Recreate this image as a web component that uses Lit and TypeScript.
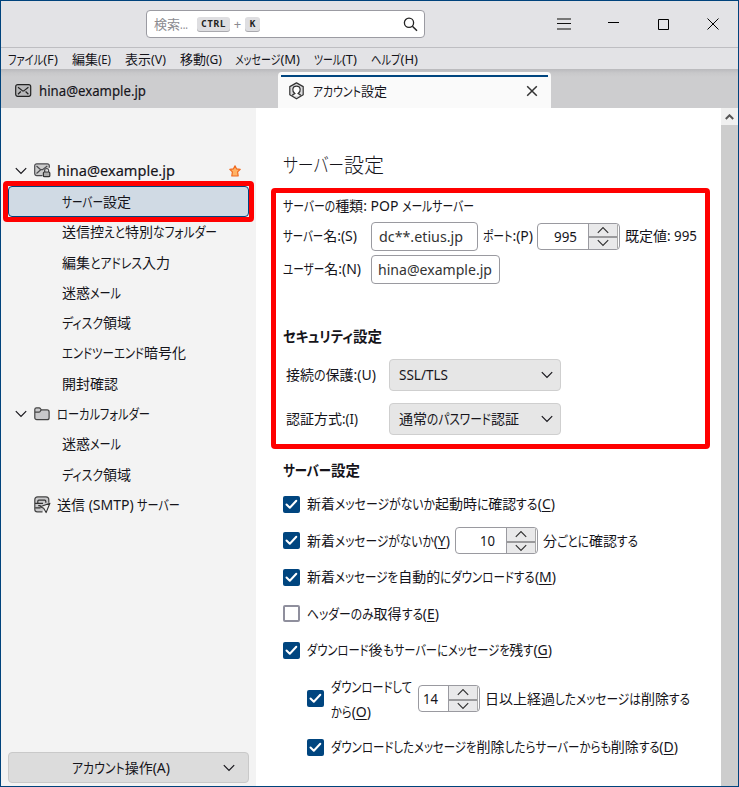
import { LitElement, html, css } from "lit";
import { customElement, property, state } from "lit/decorators.js";
import { styleMap } from "lit/directives/style-map.js";

type Run = { text: string; kind: string };

// A line of text that condenses its kana runs to a given width, leaving the
// ideographs and Latin letters at their natural proportions. Lines without
// kana condense their Latin runs instead.
@customElement("fit-text")
class FitText extends LitElement {
  @property() text = "";
  @property({ type: Number }) width = 0;
  @state() widths: number[] | null = null;

  static styles = css`
    :host { display: inline-block; white-space: pre; flex: none; }
    .line { display: inline-block; white-space: pre; }
    .run { display: inline-block; white-space: pre; transform-origin: 0 50%; }
    .key { text-decoration: underline; text-underline-offset: 2px; text-decoration-thickness: 1px; }
  `;

  get runs(): Run[] {
    const out: Run[] = [];
    const re = /_([A-Z])_|([\u4e00-\u9fff]+)|([\u3040-\u30ff]+)|((?:(?!_[A-Z]_)[^\u3040-\u30ff\u4e00-\u9fff])+)/g;
    for (const m of this.text.matchAll(re)) {
      if (m[1]) out.push({ text: m[1], kind: "key" });
      else if (m[2]) out.push({ text: m[2], kind: "kanji" });
      else if (m[3]) out.push({ text: m[3], kind: "kana" });
      else out.push({ text: m[4], kind: "latin" });
    }
    return out;
  }

  firstUpdated() {
    const spans = [...this.renderRoot.querySelectorAll<HTMLElement>(".run")];
    this.widths = spans.map((s) => s.getBoundingClientRect().width);
  }

  render() {
    const runs = this.runs;
    const w = this.widths;
    const has = (k: string) => runs.some((r) => r.kind === k);
    const elastic = has("kana") ? ["kana"] : has("latin") ? ["latin", "key"] : ["kanji"];
    let k = 1;
    if (w) {
      const total = w.reduce((a, v) => a + v, 0);
      const soft = w.reduce((a, v, i) => a + (elastic.includes(runs[i].kind) ? v : 0), 0);
      k = (this.width - (total - soft)) / soft;
    }
    return html`<span class="line">${runs.map((r, i) => {
      const s = elastic.includes(r.kind) ? k : 1;
      const st = w ? { width: `${w[i] * s}px`, transform: s === 1 ? "none" : `scaleX(${s})` } : {};
      return html`<span class="run ${r.kind}" style=${styleMap(st)}>${r.text}</span>`;
    })}</span>`;
  }
}

const fit = (text: string, width: number) => html`<fit-text .text=${text} .width=${width}></fit-text>`;

const chevron = (cls = "chev") => html`<svg class=${cls} width="12" height="8" viewBox="0 0 12 8">
  <path d="M.8 1.2 6 6.4l5.2-5.2" fill="none" stroke="currentColor" stroke-width="1.2"/></svg>`;

const mailIcon = html`<svg width="17" height="14" viewBox="0 0 17 14">
  <rect x=".7" y=".7" width="15" height="11.6" rx="2" fill="#b9b9bb" stroke="#222" stroke-width="1.2"/>
  <path d="M3 3.200 7 6.400q1.200.9 2.400 0l4-3.200M3 10.200l2.800-2.700M13.400 10.200l-2.800-2.700" fill="none" stroke="#222" stroke-width="1.200"/></svg>`;

const accountIcon = html`<svg width="17" height="18" viewBox="0 0 17 18">
  <path d="M8.500.9 15.200 4.600v8.200L8.500 16.800 1.800 12.800V4.600z" fill="#dcdcde" stroke="#333" stroke-width="1.200" stroke-linejoin="round"/>
  <path d="M4.800 13.700v-1.100l2-1C3.800 9.300 4 4.100 8.500 4.100s4.700 5.200 1.700 7.500l2 1v1.100" fill="#fff" stroke="#333" stroke-width="1.200"/></svg>`;

const secureMailIcon = html`<svg width="17" height="15" viewBox="0 0 17 15">
  <path d="M8.500 12.600H2.700a2 2 0 0 1-2-2V2.800a2 2 0 0 1 2-2h10.600a2 2 0 0 1 2 2v2" fill="#ccc" stroke="#4a4a4e" stroke-width="1.200"/>
  <path d="m2.500 3 4.200 3.700L2.500 10.500M7 6.700h1.500L13.300 3" fill="none" stroke="#4a4a4e" stroke-width="1.200"/>
  <path d="M10.600 9V7.500a2 2 0 0 1 4 0V9" fill="none" stroke="#4a4a4e" stroke-width="1.200"/>
  <rect x="9.400" y="9" width="6.400" height="4.700" rx="1" fill="#aaa" stroke="#333" stroke-width="1.200"/></svg>`;

const folderIcon = html`<svg width="17" height="14" viewBox="0 0 17 14">
  <path d="M.8 3V2.400A1.700 1.700 0 0 1 2.500.8H5q1 0 1.600 1l.7 1.100h5.800a2 2 0 0 1 2 2v5.800a2 2 0 0 1-2 2H2.800a2 2 0 0 1-2-2z" fill="#c9c9cb" stroke="#444" stroke-width="1.200"/>
  <path d="M1 5.200h3.800q1 0 1.500-1l.8-1.300" fill="none" stroke="#444" stroke-width="1.200"/></svg>`;

const smtpIcon = html`<svg width="17" height="18" viewBox="0 0 17 18">
  <path d="M8.500 15.800H3.200A2.400 2.400 0 0 1 .8 13.400V3.700A2.900 2.900 0 0 1 3.700.8h8.200a2.900 2.900 0 0 1 2.900 2.900v3" fill="#c9c9cb" stroke="#444" stroke-width="1.200"/>
  <path d="M3.800 7.300V5.200q0-1 1-1h6q1 0 1 1v1.500M1 7.300h8M1.200 11.900h5.300M4.200 9.600h2.500" fill="none" stroke="#333" stroke-width="1.200"/>
  <path d="M15.900 7.300 6.200 10.800l3.500 1.500 2.400 4.300z" fill="#eee" stroke="#333" stroke-width="1.100" stroke-linejoin="round"/></svg>`;

const starIcon = html`<svg width="12" height="12" viewBox="0 0 12 12">
  <path d="m6 .8 1.500 3 3.700.5-2.600 2.600.6 4.100H2.800l.6-4.100L.8 4.300l3.700-.5z" fill="#ffb366" stroke="#f06a20" stroke-width="1.200" stroke-linejoin="round"/></svg>`;

const MENUS: [string, number, number][] = [
  ["ファイル(F)", 8, 50], ["編集(E)", 72, 39], ["表示(V)", 125, 41], ["移動(G)", 180, 42],
  ["メッセージ(M)", 235, 65], ["ツール(T)", 314, 43], ["ヘルプ(H)", 371, 47],
];

@customElement("app-root")
class AppRoot extends LitElement {
  static styles = css`
    * { box-sizing: border-box; }
    :host {
      box-sizing: border-box;
      display: flex; flex-direction: column; position: relative; width: 739px; height: 787px;
      border: 1px solid #00437c; background: #fff; color: #15141a; overflow: hidden;
      font: 14px/20px "Noto Sans", "Noto Sans CJK JP", sans-serif; font-feature-settings: "palt";
    }
    svg { display: block; flex: none; }
    .title { display: flex; height: 46px; flex: none; align-items: center; background: #e3e3e6; }
    .search {
      display: flex; align-items: center; width: 279px; height: 28px; margin-left: 145px; font-size: 13px;
      border: 1px solid #9b9ba2; border-radius: 4px; background: #fff; padding: 0 6px 0 7px; color: #8b8b90; flex: none;
    }
    .kbd {
      height: 14px; border-radius: 3px; background: #dedee1; box-shadow: 0 1px 0 #a9a9ae; color: #222;
      font: bold 9.5px/13px "DejaVu Sans Mono", monospace; text-align: center; flex: none;
    }
    .ctrl { width: 33px; margin-left: 9px; letter-spacing: .5px; }
    .k { width: 15px; }
    .plus { width: 15px; text-align: center; font-size: 13px; }
    .mag { margin-left: auto; color: #222; }
    .wbtns { display: grid; grid-template-columns: 48px 50px 50px 50px; margin-left: 115px; justify-items: center; align-items: center; flex: none; }
    .menus { display: flex; height: 22px; flex: none; border-top: 1px solid #bebec2; background: #e3e3e6; align-items: center; padding-left: 7px; font-size: 13px; }
    .menu { flex: none; line-height: 20px; }
    .tabs {
      display: flex; height: 39px; flex: none; background: linear-gradient(#b9b9bc, #c8c8ca 4px, #cdcdcf 8px); align-items: flex-end;
    }
    .tab { display: flex; align-items: center; height: 36px; }
    .tab.mail { width: 277px; padding: 2px 0 0 14px; gap: 7px; }
    .tab.active { width: 273px; background: #fafafa; border: 3px solid #fafafa; border-width: 3px 3px 0; border-radius: 4px 4px 0 0; font-size: 13px; }
    .accent { align-self: stretch; display: flex; align-items: center; flex: 1; border-top: 2px solid #00457f; padding: 0 10px 4px 7px; gap: 8px; }
    .close { margin-left: auto; }
    .body { display: flex; flex: 1; min-height: 0; }
    .side { width: 255px; flex: none; background: #f3f3f3; display: flex; flex-direction: column; padding: 47.700px 7px 3px; }
    .node { position: relative; display: flex; align-items: center; height: 30.330px; padding-left: 54px; flex: none; }
    .node.parent { padding-left: 7px; }
    .node.leaf { padding-left: 26px; }
    .node svg.chev { margin-right: 7px; }
    .label1 { margin-left: 6px; }
    .star { margin-left: auto; margin-right: 8px; }
    .sel { width: 241px; height: 31px; background: #d0dae4; border: 1px solid #00457f; border-radius: 4px; padding-left: 53px; }
    .red { position: absolute; border: 5px solid #f00; border-radius: 4px; pointer-events: none; }
    .red.small { left: -6px; right: -6px; top: -6px; height: 41px; }
    .ops {
      margin-top: auto; height: 31px; border: 1px solid #c9c9c9; border-radius: 4px; background: #dcdcdc;
      display: flex; align-items: center; padding: 0 13px 0 63px; justify-content: space-between;
    }
    .main { flex: 1; padding: 38px 0 0 27px; position: relative; min-width: 0; display: flex; flex-direction: column; }
    .red.big { left: 15px; top: 80px; width: 439px; height: 261px; }
    .row { display: flex; align-items: center; height: 30px; flex: none; }
    .h1 { height: 40px; font-size: 20px; font-weight: 300; }
    .r1 { height: 20px; margin-top: 10px; }
    .r2 { margin-top: 5px; }
    .r3 { margin-top: 3px; }
    .h2 { height: 24px; font-weight: 700; font-size: 14.500px; margin-top: 40px; }
    .h2.second { margin-top: 23px; }
    .lab { width: 88px; flex: none; }
    .lab.wide { width: 106px; padding-left: 3px; }
    .input { height: 29px; border: 1px solid #9a9aa0; border-radius: 4px; padding: 4px 7px; flex: none; background: #fff; color: #333; }
    .i1 { width: 107px; margin-right: 5px; }
    .i2 { width: 129px; padding-left: 6px; }
    .spin { display: flex; height: 27px; width: 83px; margin: 0 5px; border: 1px solid #9a9aa0; border-radius: 4px; overflow: hidden; flex: none; line-height: 26px; }
    .spin.port { margin-left: 4px; }
    .num { flex: 1; text-align: right; padding-right: 11px; }
    .narrow { width: 62px; margin-left: 6px; }
    .narrow .num { text-align: left; padding: 0 0 0 4px; }
    .btns { display: grid; grid-template-rows: 1fr 1fr; width: 30px; border-left: 1px solid #9a9aa0; margin-right: 1px; background: #e9e9ea; border-right: 1px solid #aaa; color: #333; }
    .btns span { display: grid; place-items: center; }
    .btns span + span { border-top: 2px solid #9a9a9c; }
    .up { transform: scaleY(-1); }
    .select { display: flex; align-items: center; justify-content: space-between; width: 172px; height: 32px; border: 1px solid #cfcfcf; border-radius: 4px; background: #e6e6e6; padding: 0 7px 0 9px; flex: none; }
    .s1 { height: 32px; margin-top: 11px; }
    .s2 { height: 32px; margin-top: 12px; }
    .check { margin-top: 6.500px; }
    .check.first { margin-top: 7px; }
    .nest { padding-left: 24px; margin-top: 8.500px; }
    .tall { height: 50px; }
    .box { width: 17px; height: 17px; border-radius: 2px; background: #00457f; margin-right: 7px; display: grid; place-items: center; flex: none; }
    .box.off { background: #fff; border: 2px solid #8f8f9d; }
    .two { display: grid; width: 81px; line-height: 25px; flex: none; }
    .scroll { width: 17px; flex: none; background: #cdcdcd; }
    .arrow { height: 17px; background: #f0f0f0; display: grid; place-items: center; }
    .strong { -webkit-text-stroke: .15px currentColor; }
  `;

  box(on = true) {
    return html`<span class="box ${on ? "" : "off"}">${on
      ? html`<svg width="13" height="11" viewBox="0 0 13 11"><path d="m1.500 5.500 3.300 3.300 6.500-7" fill="none" stroke="#fff" stroke-width="2" stroke-linecap="round" stroke-linejoin="round"/></svg>`
      : ""}</span>`;
  }

  spin(n: string, w: number, cls = "") {
    return html`<div class="spin ${cls}"><span class="num">${fit(n, w)}</span>
      <div class="btns"><span>${chevron("up")}</span><span>${chevron("down")}</span></div></div>`;
  }

  menuItems() {
    return MENUS.map(([t, x, w], i) => {
      const next = MENUS[i + 1];
      const gap = next ? next[1] - x - w : 0;
      return html`<span class="menu" style=${styleMap({ marginRight: `${gap}px` })}>${fit(t, w)}</span>`;
    });
  }

  node(t: string, w: number) {
    return html`<div class="node">${fit(t, w)}</div>`;
  }

  render() {
    return html`
      <div class="title">
        <div class="search">
          ${fit("検索...", 34)}
          <span class="kbd ctrl">CTRL</span><span class="plus">+</span><span class="kbd k">K</span>
          <svg class="mag" width="15" height="15" viewBox="0 0 15 15"><circle cx="6" cy="5.800" r="4.600" fill="none" stroke="currentColor" stroke-width="1.300"/><path d="m9.400 9.200 4.600 4.600" stroke="currentColor" stroke-width="1.500"/></svg>
        </div>
        <div class="wbtns">
          <svg width="14" height="12" viewBox="0 0 14 12"><path d="M0 1h14M0 11h14" stroke="#777" stroke-width="2"/><path d="M0 5.500h14" stroke="#111"/></svg>
          <svg width="11" height="12" viewBox="0 0 11 12"><path d="M0 4.500h11" stroke="#000"/></svg>
          <svg width="11" height="11" viewBox="0 0 11 11"><path d="M.5.500h10v10H.5z" fill="none" stroke="#000"/></svg>
          <svg width="12" height="12" viewBox="0 0 12 12"><path d="m.5.500 11 11M11.500.500l-11 11" stroke="#000"/></svg>
        </div>
      </div>
      <div class="menus">${this.menuItems()}</div>
      <div class="tabs">
        <div class="tab mail">${mailIcon}<span class="strong">${fit("hina@example.jp", 107)}</span></div>
        <div class="tab active"><div class="accent">${accountIcon}${fit("アカウント設定", 74)}
          <svg class="close" width="12" height="12" viewBox="0 0 12 12"><path d="m1.200 1.200 9.600 9.600M10.800 1.200l-9.600 9.600" stroke="#333" stroke-width="1.500"/></svg>
        </div></div>
      </div>
      <div class="body">
        <div class="side">
          <div class="node parent">${chevron()}${secureMailIcon}<span class="label1 strong">${fit("hina@example.jp", 118)}</span><span class="star">${starIcon}</span></div>
          <div class="node sel">${fit("サーバー設定", 69)}<span class="red small"></span></div>
          ${this.node("送信控えと特別なフォルダー", 155)}
          ${this.node("編集とアドレス入力", 108)}
          ${this.node("迷惑メール", 59)}
          ${this.node("ディスク領域", 69)}
          ${this.node("エンドツーエンド暗号化", 124)}
          ${this.node("開封確認", 56)}
          <div class="node parent">${chevron()}${folderIcon}<span class="label1">${fit("ローカルフォルダー", 93)}</span></div>
          ${this.node("迷惑メール", 59)}
          ${this.node("ディスク領域", 69)}
          <div class="node leaf">${smtpIcon}<span class="label1">${fit("送信 (SMTP) サーバー", 123)}</span></div>
          <div class="ops">${fit("アカウント操作(A)", 98)}${chevron("down")}</div>
        </div>
        <div class="main">
          <div class="row h1">${fit("サーバー設定", 101)}</div>
          <div class="row r1">${fit("サーバーの種類: POP メールサーバー", 191)}</div>
          <div class="row r2"><span class="lab">${fit("サーバー名:(S)", 74)}</span><div class="input i1">${fit("dc**.etius.jp", 84)}</div>
            ${fit("ポート:(P)", 50)}${this.spin("995", 23, "port")}${fit("既定値: 995", 72)}</div>
          <div class="row r3"><span class="lab">${fit("ユーザー名:(N)", 78)}</span><div class="input i2">${fit("hina@example.jp", 114)}</div></div>
          <div class="row h2">${fit("セキュリティ設定", 99)}</div>
          <div class="row s1"><span class="lab wide">${fit("接続の保護:(U)", 90)}</span><div class="select">${fit("SSL/TLS", 49)}${chevron("down")}</div></div>
          <div class="row s2"><span class="lab wide">${fit("認証方式:(I)", 72)}</span><div class="select">${fit("通常のパスワード認証", 120)}${chevron("down")}</div></div>
          <div class="row h2 second">${fit("サーバー設定", 77)}</div>
          <div class="row check first">${this.box()}${fit("新着メッセージがないか起動時に確認する(_C_)", 248)}</div>
          <div class="row check">${this.box()}${fit("新着メッセージがないか(_Y_)", 143)}${this.spin("10", 15)}${fit("分ごとに確認する", 95)}</div>
          <div class="row check">${this.box()}${fit("新着メッセージを自動的にダウンロードする(_M_)", 249)}</div>
          <div class="row check">${this.box(false)}${fit("ヘッダーのみ取得する(_E_)", 132)}</div>
          <div class="row check">${this.box()}${fit("ダウンロード後もサーバーにメッセージを残す(_G_)", 245)}</div>
          <div class="row nest tall">${this.box()}<span class="two">${fit("ダウンロードして", 81)}${fit("から(_O_)", 40)}</span>
            ${this.spin("14", 15, "narrow")}${fit("日以上経過したメッセージは削除する", 205)}</div>
          <div class="row nest">${this.box()}${fit("ダウンロードしたメッセージを削除したらサーバーからも削除する(_D_)", 347)}</div>
          <span class="red big"></span>
        </div>
        <div class="scroll"><div class="arrow"><svg width="9" height="6" viewBox="0 0 9 6"><path d="m.8 5 3.700-3.700L8.200 5" fill="none" stroke="#555" stroke-width="2"/></svg></div></div>
      </div>
    `;
  }
}
